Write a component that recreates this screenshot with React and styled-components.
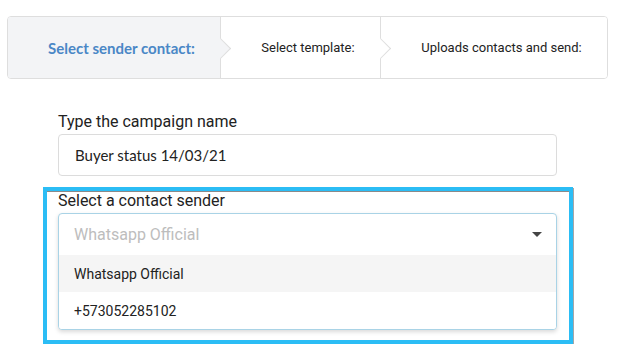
import React from "react";
import styled, { createGlobalStyle } from "styled-components";

const GlobalStyle = createGlobalStyle`
    body {
        margin: 0;
        background: #fff;
        font-family: Roboto, "Liberation Sans", sans-serif;
        color: #222;
    }
`;

const steps = [
    { label: "Select sender contact:", width: "213px" },
    { label: "Select template:", width: "160px" },
    { label: "Uploads contacts and send:", width: "auto" },
];

const senders = ["Whatsapp Official", "+573052285102"];

const App = () => {
    const [name, setName] = React.useState("Buyer status 14/03/21");
    const [hovered] = React.useState(0);

    return (
        <Page>
            <GlobalStyle />
            <Stepper>
                {steps.map((step, i) => (
                    <Step key={step.label} $active={i === 0} $last={i === steps.length - 1} $width={step.width}>
                        {step.label}
                    </Step>
                ))}
            </Stepper>
            <Form onSubmit={(e) => e.preventDefault()}>
                <Group>
                    <Label>Type the campaign name</Label>
                    <Input value={name} onChange={(e) => setName(e.target.value)} />
                </Group>
                <Highlight>
                    <Group>
                        <Label>Select a contact sender</Label>
                        <SelectBox>
                            <SelectHead>
                                <Placeholder>Whatsapp Official</Placeholder>
                                <Caret />
                            </SelectHead>
                            {senders.map((s, i) => (
                                <Option key={s} $hover={i === hovered}>
                                    {s}
                                </Option>
                            ))}
                        </SelectBox>
                    </Group>
                </Highlight>
            </Form>
        </Page>
    );
};

export default App;

const Page = styled.div`
    padding: 16px 9px 0 7px;
`;

const Stepper = styled.div`
    display: flex;
    height: 63px;
    box-sizing: border-box;
    border: 1px solid #dedede;
    border-radius: 4px;
    overflow: hidden;
`;

const Step = styled.div`
    position: relative;
    flex: ${(p) => (p.$width === "auto" ? "1" : `0 0 ${p.$width}`)};
    display: flex;
    align-items: center;
    justify-content: center;
    padding-left: 15px;
    box-sizing: border-box;
    background: ${(p) => (p.$active ? "#f3f4f6" : "#fff")};
    border-right: ${(p) => (p.$last ? "none" : "1px solid #dedede")};
    color: ${(p) => (p.$active ? "#4a87c6" : "#222")};
    font-family: ${(p) => (p.$active ? "Lato, sans-serif" : "Roboto, sans-serif")};
    font-weight: ${(p) => (p.$active ? 700 : 400)};
    font-size: ${(p) => (p.$active ? "15px" : "13px")};
    &::after {
        content: "";
        display: ${(p) => (p.$last ? "none" : "block")};
        position: absolute;
        z-index: 1;
        top: 50%;
        right: -8px;
        width: 14px;
        height: 14px;
        margin-top: -7px;
        background: ${(p) => (p.$active ? "#f3f4f6" : "#fff")};
        border-top: 1px solid #dedede;
        border-right: 1px solid #dedede;
        transform: rotate(45deg);
    }
`;

const Form = styled.form`
    margin: 33px 0 0 51px;
    width: 499px;
    display: flex;
    flex-direction: column;
    gap: 11px;
`;

const Group = styled.div`
    display: flex;
    flex-direction: column;
    gap: 3px;
`;

const Label = styled.label`
    font-size: 16px;
    line-height: 19px;
    color: #222;
`;

const Input = styled.input`
    height: 42px;
    box-sizing: border-box;
    padding: 0 16px;
    border: 1px solid #dcdcdc;
    border-radius: 4px;
    font-family: Lato, sans-serif;
    font-size: 15px;
    color: #222;
    outline: none;
`;

const Highlight = styled.div`
    margin-left: -15px;
    width: 530px;
    box-sizing: border-box;
    border: 4px solid #2bbdf5;
    padding: 0 12px 10px 11px;
    box-shadow: 1px 1px 0 rgba(0, 0, 0, 0.35), inset 0 1px 0 #8a8a8a;
`;

const SelectBox = styled.div`
    border: 1px solid #a9d3e6;
    border-radius: 4px;
    background: #fff;
    box-shadow: 0 2px 4px rgba(0, 0, 0, 0.15);
    overflow: hidden;
`;

const SelectHead = styled.div`
    height: 41px;
    display: flex;
    align-items: center;
    justify-content: space-between;
    padding: 0 14px 0 15px;
`;

const Placeholder = styled.span`
    font-size: 16px;
    color: #bdbdbd;
`;

const Caret = styled.span`
    width: 0;
    height: 0;
    border-left: 5px solid transparent;
    border-right: 5px solid transparent;
    border-top: 5px solid #444;
`;

const Option = styled.div`
    height: 37px;
    display: flex;
    align-items: center;
    padding-left: 15px;
    font-size: 14px;
    color: #222;
    background: ${(p) => (p.$hover ? "#f5f5f5" : "#fff")};
`;
